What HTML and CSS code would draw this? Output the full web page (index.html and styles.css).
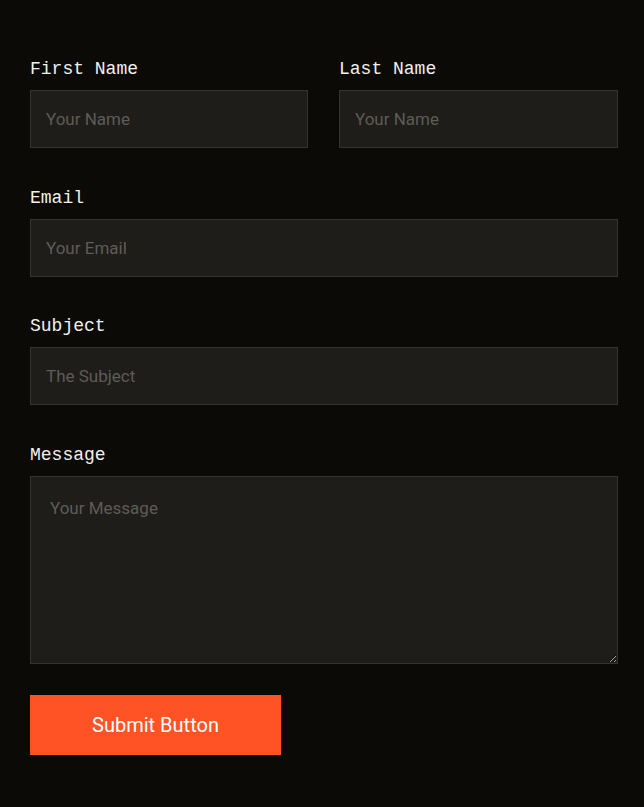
FILE: index.html
```html
<!DOCTYPE html>
<html lang="en">
<head>
    <meta charset="UTF-8">
    <meta name="viewport" content="width=device-width, initial-scale=1.0">
    <title>Contact</title>
    <link rel="stylesheet" href="styles.css">
</head>
<body>
    <form class="contact-form">
        <div class="row">
            <div class="field">
                <label for="firstName">First Name</label>
                <input id="firstName" type="text" placeholder="Your Name">
            </div>
            <div class="field">
                <label for="lastName">Last Name</label>
                <input id="lastName" type="text" placeholder="Your Name">
            </div>
        </div>
        <div class="field email-field">
            <label for="email">Email</label>
            <input id="email" type="email" placeholder="Your Email">
        </div>
        <div class="field">
            <label for="subject">Subject</label>
            <input id="subject" type="text" placeholder="The Subject">
        </div>
        <div class="field">
            <label for="message">Message</label>
            <textarea id="message" placeholder="Your Message"></textarea>
        </div>
        <button type="submit" class="submit-btn">Submit Button</button>
    </form>
</body>
</html>
```

FILE: styles.css
```css
body {
    margin: 0;
    background-color: #0b0a07;
}

.contact-form {
    padding: 54px 26px 40px 30px;
}

.row {
    display: grid;
    grid-template-columns: 278px 1fr;
    gap: 31px;
}

.field {
    display: flex;
    flex-direction: column;
    margin-bottom: 35px;
}

.email-field {
    margin-bottom: 34px;
}

.field label {
    font-family: 'Liberation Mono', monospace;
    font-size: 18px;
    line-height: 28px;
    color: #f2f1ea;
    margin-bottom: 8px;
    padding-top: 1px;
    height: 27px;
}

.field input,
.field textarea {
    box-sizing: border-box;
    width: 100%;
    height: 58px;
    padding: 0 15px;
    background-color: #1e1d1a;
    border: 1px solid #34332f;
    color: #ddd;
    font-family: Roboto, sans-serif;
    font-size: 17px;
    outline: none;
    border-radius: 0;
    margin: 0;
}

.field textarea {
    display: block;
    height: 188px;
    padding: 21px 19px;
}

.field input::placeholder,
.field textarea::placeholder {
    color: #5d5c57;
}

.field:last-of-type {
    margin-bottom: 31px;
}

.submit-btn {
    display: block;
    width: 251px;
    height: 60px;
    border: none;
    border-radius: 0;
    background-color: #ff5326;
    color: #fff;
    font-family: Roboto, sans-serif;
    font-size: 20px;
    cursor: pointer;
}
```
